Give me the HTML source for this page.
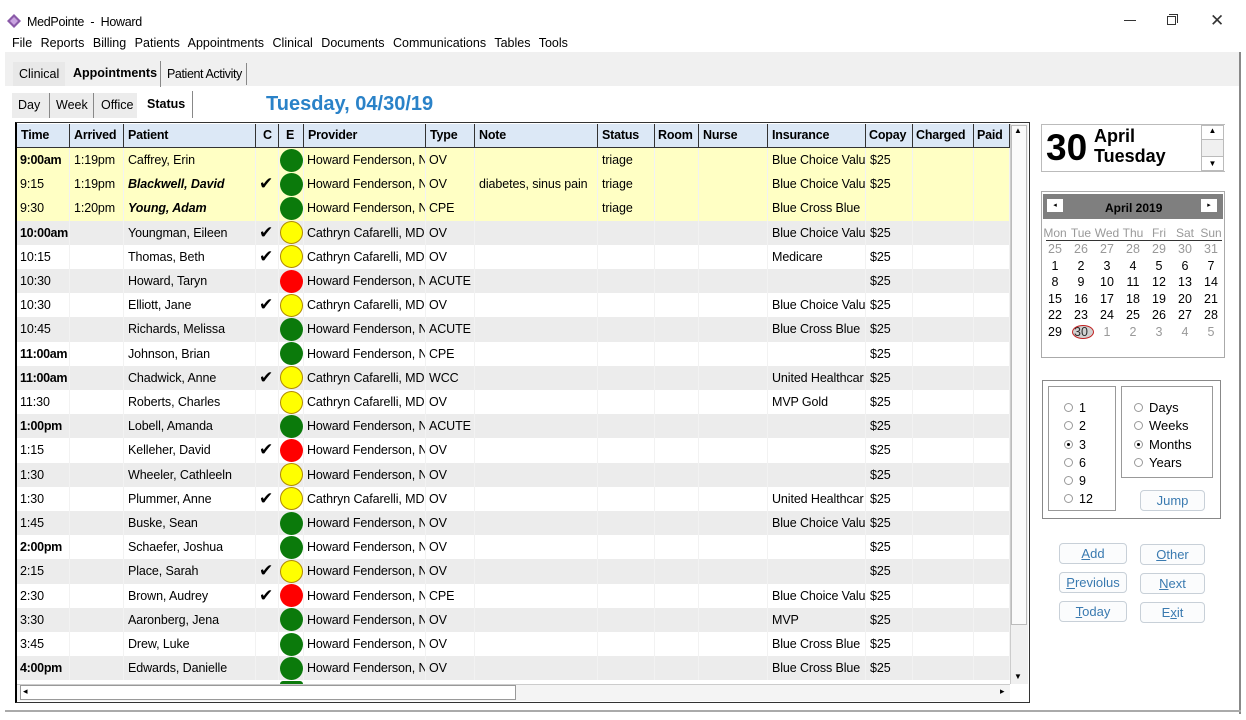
<!DOCTYPE html>
<html><head><meta charset="utf-8">
<style>
*{box-sizing:border-box;margin:0;padding:0}
body{width:1246px;height:720px;background:#fff;font-family:"Liberation Sans",Arial,sans-serif;font-size:12.5px;color:#000;position:relative;overflow:hidden}
.a{position:absolute;white-space:nowrap}
.hd{position:absolute;top:124px;height:24px;background:#dce8f6;border-right:1px solid #333;border-bottom:1px solid #333;font-weight:bold;font-size:12.5px;line-height:23px;padding-left:4px;overflow:hidden;letter-spacing:-0.2px}
.row{position:absolute;left:17px;width:993px;height:24.2px}
.c{position:absolute;top:0;height:100%;line-height:24px;padding-left:4px;overflow:hidden;border-right:1px solid #f2f2f2;white-space:nowrap;font-size:12.5px;letter-spacing:-0.1px}
.dot{position:absolute;width:23px;height:23px;border-radius:50%;left:280px;z-index:2}
.btn{position:absolute;width:68px;height:21px;border:1px solid #c8d0d8;border-radius:4px;background:#fbfcfd;color:#3a7ab0;text-align:center;line-height:19px;font-size:13px}
.rad{display:inline-block;width:9px;height:9px;border:1px solid #999;border-radius:50%;margin-right:6px;vertical-align:0px;position:relative}
.rad.on:after{content:"";position:absolute;left:2px;top:2px;width:3px;height:3px;border-radius:50%;background:#000}
.cal span{position:absolute;width:26px;text-align:center}
</style></head><body>
<svg class="a" style="left:7px;top:14px" width="14" height="14" viewBox="0 0 14 14"><path d="M7 0L14 7L7 14L0 7Z" fill="#8a5aa8"/><path d="M7 3L11 7L7 11L3 7Z" fill="#c9a4e0"/></svg>
<div class="a" style="left:27px;top:15px;font-size:12.5px;letter-spacing:-0.3px">MedPointe &nbsp;- &nbsp;Howard</div>
<div class="a" style="left:1124px;top:20px;width:12px;height:1px;background:#333"></div>
<div class="a" style="left:1167px;top:16px;width:9px;height:9px;border:1px solid #333"></div>
<div class="a" style="left:1169px;top:14px;width:9px;height:9px;border-top:1px solid #333;border-right:1px solid #333"></div>
<div class="a" style="left:1210px;top:11px;font-size:17px;color:#333">✕</div>
<div class="a" style="left:12px;top:36px;font-size:12.5px;word-spacing:5px">File Reports Billing Patients Appointments Clinical Documents Communications Tables Tools</div>
<div class="a" style="left:5px;top:52px;width:1236px;height:34px;background:#f0f0f0"></div>
<div class="a" style="left:1239px;top:52px;width:2px;height:662px;background:#888"></div>
<div class="a" style="left:5px;top:710px;width:1236px;height:2px;background:#aaa"></div>
<div class="a" style="left:13px;top:62px;width:52px;height:24px;background:#e8e8e8"></div>
<div class="a" style="left:19px;top:67px">Clinical</div>
<div class="a" style="left:73px;top:66px;font-weight:bold">Appointments</div>
<div class="a" style="left:160px;top:61px;width:1px;height:26px;background:#888"></div>
<div class="a" style="left:167px;top:67px;letter-spacing:-0.4px">Patient Activity</div>
<div class="a" style="left:246px;top:63px;width:1px;height:22px;background:#888"></div>
<div class="a" style="left:12px;top:93px;width:125px;height:25px;background:#ececec"></div>
<div class="a" style="left:18px;top:98px">Day</div>
<div class="a" style="left:49px;top:93px;width:1px;height:25px;background:#888"></div>
<div class="a" style="left:56px;top:98px">Week</div>
<div class="a" style="left:93px;top:93px;width:1px;height:25px;background:#888"></div>
<div class="a" style="left:101px;top:98px">Office</div>
<div class="a" style="left:147px;top:97px;font-weight:bold">Status</div>
<div class="a" style="left:192px;top:91px;width:1px;height:27px;background:#888"></div>
<div class="a" style="left:266px;top:93px;font-size:20px;font-weight:bold;color:#2a82c8">Tuesday, 04/30/19</div>
<div class="a" style="left:15px;top:122px;width:1015px;height:581px;border:1px solid #333;border-left:2px solid #000"></div>
<div id="grid"></div>
<div class="a" style="left:1010px;top:124px;width:18px;height:560px;background:#f0f0f0;border-left:1px solid #ccc"></div>
<div class="a" style="left:1011px;top:125px;width:16px;height:500px;background:#fafafa;border:1px solid #bbb"></div>
<div class="a" style="left:1014px;top:126px;font-size:8px">▲</div>
<div class="a" style="left:1014px;top:672px;font-size:8px">▼</div>
<div class="a" style="left:17px;top:684px;width:993px;height:17px;background:#f4f4f4;border-top:1px solid #ccc"></div>
<div class="a" style="left:20px;top:685px;width:496px;height:15px;background:#fff;border:1px solid #999"></div>
<div class="a" style="left:23px;top:686px;font-size:9px">◂</div>
<div class="a" style="left:1000px;top:686px;font-size:9px">▸</div>
<div class="a" style="left:1041px;top:124px;width:184px;height:48px;border:1px solid #bbb;border-right:none"></div>
<div class="a" style="left:1046px;top:126px;font-size:37px;font-weight:bold;line-height:44px">30</div>
<div class="a" style="left:1094px;top:126px;font-size:18px;font-weight:bold;line-height:20px">April<br>Tuesday</div>
<div class="a" style="left:1201px;top:125px;width:23px;height:46px;background:#f0f0f0;border:1px solid #bbb"></div>
<div class="a" style="left:1202px;top:126px;width:21px;height:14px;background:#fff;border-bottom:1px solid #bbb;font-size:8px;text-align:center">▲</div>
<div class="a" style="left:1202px;top:156px;width:21px;height:14px;background:#fff;border-top:1px solid #bbb;font-size:8px;text-align:center;line-height:14px">▼</div>
<div class="a" style="left:1041px;top:191px;width:184px;height:167px;border:1px solid #aaa"></div>
<div class="a" style="left:1043px;top:194px;width:180px;height:25px;background:#7f7f7f"></div>
<div class="a" style="left:1047px;top:199px;width:16px;height:13px;background:#fff;font-size:7px;text-align:center;line-height:13px">◂</div>
<div class="a" style="left:1201px;top:199px;width:16px;height:13px;background:#fff;font-size:7px;text-align:center;line-height:13px">▸</div>
<div class="a" style="left:1105px;top:201px;font-size:12px;font-weight:bold">April 2019</div>
<div class="a" style="left:1046px;top:240px;width:176px;height:1px;background:#333"></div>
<div class="cal" id="cal"></div>
<div class="a" style="left:1072px;top:325px;width:22px;height:14px;border:1.5px solid #c02020;border-radius:50%;background:rgba(120,120,120,.35)"></div>
<div class="a" style="left:1042px;top:380px;width:179px;height:139px;border:1px solid #888"></div>
<div class="a" style="left:1048px;top:386px;width:68px;height:125px;border:1px solid #999"></div>
<div class="a" style="left:1121px;top:386px;width:92px;height:92px;border:1px solid #999"></div>
<div class="a" style="left:1064px;top:399px;line-height:18.3px;font-size:12.5px">
<div><span class="rad"></span>1</div><div><span class="rad"></span>2</div><div><span class="rad on"></span>3</div><div><span class="rad"></span>6</div><div><span class="rad"></span>9</div><div><span class="rad"></span>12</div></div>
<div class="a" style="left:1134px;top:399px;line-height:18.3px;font-size:13px">
<div><span class="rad"></span>Days</div><div><span class="rad"></span>Weeks</div><div><span class="rad on"></span>Months</div><div><span class="rad"></span>Years</div></div>
<div class="btn" style="left:1140px;top:490px;width:65px">Jump</div>
<div class="btn" style="left:1059px;top:543px"><u>A</u>dd</div>
<div class="btn" style="left:1140px;top:544px;width:65px"><u>O</u>ther</div>
<div class="btn" style="left:1059px;top:572px"><u>P</u>reviolus</div>
<div class="btn" style="left:1140px;top:573px;width:65px"><u>N</u>ext</div>
<div class="btn" style="left:1059px;top:601px"><u>T</u>oday</div>
<div class="btn" style="left:1140px;top:602px;width:65px">E<u>x</u>it</div>
<script>
var cols=[["Time",17,53],["Arrived",70,54],["Patient",124,132],["C",256,23],["E",279,25],["Provider",304,122],["Type",426,49],["Note",475,123],["Status",598,57],["Room",655,44],["Nurse",699,69],["Insurance",768,98],["Copay",866,47],["Charged",913,61],["Paid",974,36]];
var g='';
cols.forEach(function(c){g+='<div class="hd" style="left:'+c[1]+'px;width:'+c[2]+'px;'+(c[0]=="C"||c[0]=="E"?'padding-left:7px;':'')+(c[0]=="Copay"||c[0]=="Room"||c[0]=="Charged"||c[0]=="Paid"?'padding-left:3px;':'')+'">'+c[0]+'</div>';});
var HF="Howard Fenderson, N",CC="Cathryn Cafarelli, MD",BCV="Blue Choice Valu",BCB="Blue Cross Blue";
var G="#0b7a0b",Y="#ffff00",R="#ff0000";
var d=[
["9:00am",1,"1:19pm","Caffrey, Erin",0,0,G,HF,"OV","","triage",BCV,"$25"],
["9:15",0,"1:19pm","Blackwell, David",2,1,G,HF,"OV","diabetes, sinus pain","triage",BCV,"$25"],
["9:30",0,"1:20pm","Young, Adam",2,0,G,HF,"CPE","","triage",BCB,""],
["10:00am",1,"","Youngman, Eileen",0,1,Y,CC,"OV","","",BCV,"$25"],
["10:15",0,"","Thomas, Beth",0,1,Y,CC,"OV","","","Medicare","$25"],
["10:30",0,"","Howard, Taryn",0,0,R,HF,"ACUTE","","","","$25"],
["10:30",0,"","Elliott, Jane",0,1,Y,CC,"OV","","",BCV,"$25"],
["10:45",0,"","Richards, Melissa",0,0,G,HF,"ACUTE","","",BCB,"$25"],
["11:00am",1,"","Johnson, Brian",0,0,G,HF,"CPE","","","","$25"],
["11:00am",1,"","Chadwick, Anne",0,1,Y,CC,"WCC","","","United Healthcar","$25"],
["11:30",0,"","Roberts, Charles",0,0,Y,CC,"OV","","","MVP Gold","$25"],
["1:00pm",1,"","Lobell, Amanda",0,0,G,HF,"ACUTE","","","","$25"],
["1:15",0,"","Kelleher, David",0,1,R,HF,"OV","","","","$25"],
["1:30",0,"","Wheeler, Cathleeln",0,0,Y,HF,"OV","","","","$25"],
["1:30",0,"","Plummer, Anne",0,1,Y,CC,"OV","","","United Healthcar","$25"],
["1:45",0,"","Buske, Sean",0,0,G,HF,"OV","","",BCV,"$25"],
["2:00pm",1,"","Schaefer, Joshua",0,0,G,HF,"OV","","","","$25"],
["2:15",0,"","Place, Sarah",0,1,Y,HF,"OV","","","","$25"],
["2:30",0,"","Brown, Audrey",0,1,R,HF,"CPE","","",BCV,"$25"],
["3:30",0,"","Aaronberg, Jena",0,0,G,HF,"OV","","","MVP","$25"],
["3:45",0,"","Drew, Luke",0,0,G,HF,"OV","","",BCB,"$25"],
["4:00pm",1,"","Edwards, Danielle",0,0,G,HF,"OV","","",BCB,"$25"]];
var H=24.2;
d.forEach(function(r,i){
 var top=148+i*H;
 var bg=i<3?"#ffffc4":(i%2==1?"#ececec":"#fff");
 var vals=[r[0],r[2],r[3],r[5]?"✔":"","",r[7],r[8],r[9],r[10],"","",r[11],r[12],"",""];
 g+='<div class="row" style="top:'+top+'px;height:'+H+'px;background:'+bg+'">';
 cols.forEach(function(c,j){
  var st='left:'+(c[1]-17)+'px;width:'+c[2]+'px;';
  if(j==0){st+='padding-left:3px;';if(r[1])st+='font-weight:bold;letter-spacing:-0.3px;';}
  if(j==2&&r[4]==2)st+='font-weight:bold;font-style:italic;';
  if(j==3)st+='font-size:17px;padding-left:3px;';
  if(j==5)st+='padding-left:3px;';if(j==6)st+='padding-left:3px;';
  g+='<div class="c" style="'+st+'">'+vals[j]+'</div>';
 });
 g+='</div>';
 g+='<div class="dot" style="top:'+(top+0.6)+'px;background:'+r[6]+';'+(r[6]==Y?'border:1px solid #b08a00;':'')+'"></div>';
});
g+='<div class="row" style="top:'+(148+22*H)+'px;height:'+(684-148-22*H)+'px;background:#fff"></div>';
g+='<div class="dot" style="top:'+(148+22*H+1)+'px;height:'+(684-149-22*H)+'px;border-radius:12px 12px 0 0;background:'+G+'"></div>';
document.getElementById('grid').innerHTML=g;
var cal='';var hdr=["Mon","Tue","Wed","Thu","Fri","Sat","Sun"];
var xs=1042;
hdr.forEach(function(h,i){cal+='<span style="left:'+(xs+i*26)+'px;top:226px;color:#999;font-size:12px">'+h+'</span>';});
var days=[25,26,27,28,29,30,31];for(var k=1;k<=30;k++)days.push(k);days.push(1,2,3,4,5);
days.forEach(function(v,i){var row=Math.floor(i/7),col=i%7;var grey=(i<7||i>36);
cal+='<span style="left:'+(xs+col*26)+'px;top:'+(242+row*16.5)+'px;color:'+(grey?'#999':'#000')+';font-size:12.5px">'+v+'</span>';});
document.getElementById('cal').innerHTML=cal;
</script>
</body></html>
